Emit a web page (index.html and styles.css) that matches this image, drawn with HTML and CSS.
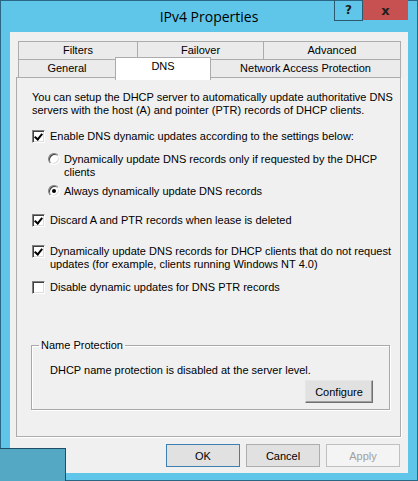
FILE: index.html
```html
<!DOCTYPE html>
<html lang="en">
<head>
    <meta charset="UTF-8">
    <meta name="viewport" content="width=device-width, initial-scale=1.0">
    <title>IPv4 Properties</title>
    <link rel="stylesheet" href="styles.css">
</head>
<body>
    <div class="window">
        <div class="titlebar">
            <span class="title">IPv4 Properties</span>
            <div class="caption-buttons">
                <div class="cap-btn help">?</div>
                <div class="cap-btn close">x</div>
            </div>
        </div>

        <div class="client">
            <!-- Pestañas -->
            <div class="tabs">
                <div class="tab-row">
                    <div class="tab tab-filters">Filters</div>
                    <div class="tab tab-failover">Failover</div>
                    <div class="tab tab-advanced">Advanced</div>
                </div>
                <div class="tab-row">
                    <div class="tab tab-general">General</div>
                    <div class="tab tab-dns active">DNS</div>
                    <div class="tab tab-nap">Network Access Protection</div>
                </div>
            </div>

            <!-- Contenido de la pestaña DNS -->
            <div class="panel">
                <p class="intro">You can setup the DHCP server to automatically update authoritative DNS<br>servers with the host (A) and pointer (PTR) records of DHCP clients.</p>

                <div class="option opt-enable">
                    <span class="check on"></span>
                    <span>Enable DNS dynamic updates according to the settings below:</span>
                </div>

                <div class="option radio-opt opt-radio1">
                    <span class="radio"></span>
                    <span>Dynamically update DNS records only if requested by the DHCP<br>clients</span>
                </div>
                <div class="option radio-opt opt-radio2">
                    <span class="radio on"></span>
                    <span>Always dynamically update DNS records</span>
                </div>

                <div class="option opt-discard">
                    <span class="check on"></span>
                    <span>Discard A and PTR records when lease is deleted</span>
                </div>

                <div class="option opt-legacy">
                    <span class="check on"></span>
                    <span>Dynamically update DNS records for DHCP clients that do not request<br>updates (for example, clients running Windows NT 4.0)</span>
                </div>

                <div class="option opt-ptr">
                    <span class="check"></span>
                    <span>Disable dynamic updates for DNS PTR records</span>
                </div>

                <fieldset class="group">
                    <legend>Name Protection</legend>
                    <p class="group-text">DHCP name protection is disabled at the server level.</p>
                    <div class="group-actions">
                        <button class="btn btn-configure">Configure</button>
                    </div>
                </fieldset>
            </div>

            <div class="dialog-buttons">
                <button class="btn btn-default">OK</button>
                <button class="btn">Cancel</button>
                <button class="btn" disabled>Apply</button>
            </div>
        </div>

        <div class="behind"></div>
    </div>
</body>
</html>
```

FILE: styles.css
```css
body {
    margin: 0;
    font-family: "Liberation Sans", Arial, sans-serif;
    font-size: 11px;
    color: #000;
}
.window {
    position: relative;
    width: 418px;
    height: 481px;
    background: #5fc6ea;
    box-shadow: inset 0 0 0 1px #2a6784;
    overflow: hidden;
}
.titlebar {
    height: 32px;
    display: flex;
    align-items: center;
    justify-content: center;
}
.title {
    font-family: "Open Sans", "Noto Sans", sans-serif;
    font-size: 14px;
    padding-top: 1px;
}
.caption-buttons {
    position: absolute;
    top: 0;
    right: 10px;
    display: flex;
}
.cap-btn {
    height: 21px;
    display: flex;
    align-items: center;
    justify-content: center;
    font-family: "DejaVu Sans", sans-serif;
    font-weight: bold;
    font-size: 12px;
    color: #1b1b1b;
    box-sizing: border-box;
}
.help {
    width: 29px;
    border: 1px solid #2a5a70;
    border-top: none;
}
.close {
    width: 45px;
    height: 20px;
    background: #c75050;
    font-size: 13px;
    color: #202020;
}
.client {
    margin: 0 10px;
    height: 441px;
    background: #f0f0f0;
    padding: 9px 7px 0 6px;
    box-sizing: border-box;
}
.tabs {
    margin-left: 2px;
}
.tab-row {
    display: flex;
    height: 19px;
}
.tab-row + .tab-row {
    margin-top: -1px;
}
.tab {
    box-sizing: border-box;
    height: 19px;
    border: 1px solid #acacac;
    background: #ebebeb;
    text-align: center;
    line-height: 17px;
}
.tab + .tab {
    margin-left: -1px;
}
.tab-filters { width: 120px; }
.tab-failover { width: 127px; }
.tab-advanced { width: 138px; }
.tab-general { width: 98px; }
.tab-dns { width: 96px; }
.tab-nap { width: 191px; }
.tab.active {
    position: relative;
    z-index: 1;
    height: 23px;
    margin-top: -2px;
    background: #fff;
    border-bottom: none;
    line-height: 17px;
}
.panel {
    margin-top: -1px;
    width: 385px;
    height: 360px;
    box-sizing: border-box;
    border: 1px solid #acacac;
    box-shadow: 1px 1px 0 #fff;
    padding: 13px 10px 0 14px;
}
.intro {
    margin: 0 0 0 1px;
    line-height: 13px;
    white-space: nowrap;
}
.option {
    display: flex;
    align-items: flex-start;
    line-height: 13px;
    white-space: nowrap;
}
.option .check {
    margin: 0 5px 0 1px;
}
.opt-enable { margin-top: 13px; }
.opt-radio1 { margin-top: 10px; }
.opt-radio2 { margin-top: 6px; }
.opt-discard { margin-top: 16px; }
.opt-legacy { margin-top: 18px; }
.opt-ptr { margin-top: 10px; }
.radio-opt {
    padding-left: 17px;
}
.check {
    flex: none;
    width: 13px;
    height: 13px;
    box-sizing: border-box;
    background: #fff;
    border: 1px solid;
    border-color: #808080 #fff #fff #808080;
    box-shadow: inset 1px 1px 0 #404040, inset -1px -1px 0 #dcdcdc;
    position: relative;
}
.check.on::after {
    content: "";
    position: absolute;
    left: 3px;
    top: 1px;
    width: 3px;
    height: 6px;
    border: solid #000;
    border-width: 0 2px 2px 0;
    transform: rotate(40deg);
}
.radio {
    flex: none;
    width: 12px;
    height: 12px;
    margin: 0 4px 0 0;
    box-sizing: border-box;
    border-radius: 50%;
    background: #fff;
    border: 1px solid;
    border-color: #808080 #fff #fff #808080;
    box-shadow: inset 1px 1px 0 #404040, inset -1px -1px 0 #dcdcdc;
    position: relative;
}
.radio.on::after {
    content: "";
    position: absolute;
    left: 3px;
    top: 3px;
    width: 4px;
    height: 4px;
    border-radius: 50%;
    background: #000;
}
.group {
    margin: 45px 0 0 0;
    width: 359px;
    box-sizing: border-box;
    padding: 12px 16px 6px 18px;
    border: 1px solid #a9a9a9;
    box-shadow: inset 1px 1px 0 #fff, 1px 1px 0 #fff;
}
.group legend {
    margin-left: -11px;
    padding: 0 2px;
    line-height: 13px;
}
.group-text {
    margin: 0;
    line-height: 13px;
}
.group-actions {
    display: flex;
    justify-content: flex-end;
    margin-top: 3px;
}
.btn {
    font-family: "Liberation Sans", Arial, sans-serif;
    font-size: 11px;
    color: #000;
    height: 23px;
    width: 74px;
    padding: 0;
    box-sizing: border-box;
    background: #e1e1e1;
    border: 1px solid #adadad;
}
.btn-configure {
    width: 68px;
    border-color: #e6e6e6 #707070 #707070 #e6e6e6;
    box-shadow: inset -1px -1px 0 #a0a0a0;
}
.btn-default {
    border-color: #3c7fb1;
}
.btn:disabled {
    background: #f4f4f4;
    border-color: #bfbfbf;
    color: #a0a0a0;
}
.dialog-buttons {
    display: flex;
    justify-content: flex-end;
    gap: 6px;
    margin-top: 7px;
    width: 384px;
}
.behind {
    position: absolute;
    left: 0;
    bottom: 0;
    width: 66px;
    height: 33px;
    box-sizing: border-box;
    background: #55a8c3;
    border-top: 1px solid #1d4f66;
    border-right: 1px solid #1d4f66;
}
```
